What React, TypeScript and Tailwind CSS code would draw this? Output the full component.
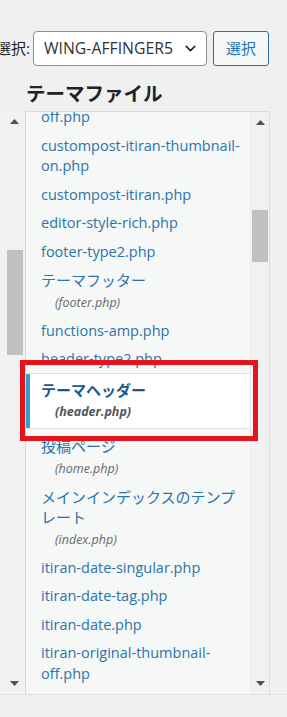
import { ChevronDown } from 'lucide-react'

type FileItem = {
  name: string
  file?: string
  current?: boolean
}

const files: FileItem[] = [
  { name: 'custompost-itiran-thumbnail-off.php' },
  { name: 'custompost-itiran-thumbnail-on.php' },
  { name: 'custompost-itiran.php' },
  { name: 'editor-style-rich.php' },
  { name: 'footer-type2.php' },
  { name: 'テーマフッター', file: '(footer.php)' },
  { name: 'functions-amp.php' },
  { name: 'header-type2.php' },
  { name: 'テーマヘッダー', file: '(header.php)', current: true },
  { name: '投稿ページ', file: '(home.php)' },
  { name: 'メインインデックスのテンプレート', file: '(index.php)' },
  { name: 'itiran-date-singular.php' },
  { name: 'itiran-date-tag.php' },
  { name: 'itiran-date.php' },
  { name: 'itiran-original-thumbnail-off.php' },
  { name: 'itiran-tag.php' },
]

const font = { fontFamily: '"Open Sans", "Noto Sans CJK JP", sans-serif' }

// 日本語はやや大きめ、英字は少し小さめにして元の幅に合わせる
const isLatin = (s: string) => /^[\x20-\x7e]+$/.test(s)

function Arrow({ down = false }: { down?: boolean }) {
  return (
    <svg width="9" height="5" viewBox="0 0 9 5" className="block">
      {down ? <path d="M0 0 H9 L4.5 5 Z" fill="#505050" /> : <path d="M0 5 H9 L4.5 0 Z" fill="#505050" />}
    </svg>
  )
}

function Scrollbar({
  thumbTop,
  thumbHeight,
  className,
  thumbClass,
}: {
  thumbTop: number
  thumbHeight: number
  className: string
  thumbClass: string
}) {
  return (
    <div className={`flex flex-col ${className}`}>
      <div className="h-[20px] flex items-center justify-center shrink-0">
        <Arrow />
      </div>
      <div className="flex-1">
        <div className={`bg-[#c1c1c1] ${thumbClass}`} style={{ marginTop: thumbTop, height: thumbHeight }} />
      </div>
      <div className="h-[22px] flex items-center justify-center shrink-0">
        <Arrow down />
      </div>
    </div>
  )
}

export default function App() {
  return (
    <div className="relative w-[287px] h-[717px] overflow-hidden bg-[#f0f0f1] text-[#1d2327]" style={font}>
      {/* テーマ選択 */}
      <div className="flex items-center pt-[31px]">
        <label className="-ml-[4px] text-[15px] leading-[35px] text-[#1d2327]">選択:</label>
        <div className="ml-[3px] w-[174px] h-[35px] flex items-center justify-between bg-white border border-[#8c8f94] rounded-[4px] pl-[10px] pr-[7px]">
          <span className="text-[15.8px] text-[#2c3338]">WING-AFFINGER5</span>
          <ChevronDown size={17} strokeWidth={2.2} className="text-[#1d2327]" />
        </div>
        <button className="ml-[6px] w-[56px] h-[35px] bg-[#f6f7f7] border border-[#2271b1] rounded-[3px] text-[15px] text-[#2271b1]">
          選択
        </button>
      </div>

      <h2
        className="mt-[14px] pl-[26px] text-[19.5px] leading-[26px] font-bold text-[#1d2327]"
        style={{ fontFamily: '"Noto Sans CJK JP", sans-serif' }}
      >
        テーマファイル
      </h2>

      {/* ファイル一覧 */}
      <div className="mt-[5px] flex h-[584px] border-b border-[#e2e2e2]">
        <Scrollbar
          thumbTop={119}
          thumbHeight={105}
          className="w-[25px] bg-[#f1f1f1] pl-[4px]"
          thumbClass="ml-[3px] w-[16px]"
        />
        <div className="flex w-[245px] bg-[#f6f7f7] border border-b-0 border-[#dcdcde]">
          <div className="flex-1 overflow-hidden">
            <ul className="-mt-[29.5px]">
              {files.map((f) =>
                f.current ? (
                  <li
                    key={f.name}
                    className="mb-[4px] pt-[6px] pb-[6px] pl-[11px] pr-[4px] bg-white border-l-4 border-[#2ea2cc] shadow-[0_0_0_1px_#e4e4e4,0_1px_1px_rgba(0,0,0,0.06)]"
                  >
                    <div className="text-[15px] leading-[20.5px] font-bold text-[#1a5a8a]">{f.name}</div>
                    <div className="mt-[2px] pl-[14px] text-[12.5px] leading-[20px] italic font-bold text-[#50575e]">
                      {f.file}
                    </div>
                  </li>
                ) : (
                  <li key={f.name} className="py-[4px] pl-[15px] pr-[4px]">
                    <div
                      className={`${isLatin(f.name) ? 'text-[14.5px]' : 'text-[15px]'} leading-[20.5px] text-[#2b74a9]`}
                    >
                      {f.name}
                    </div>
                    {f.file && (
                      <div className="mt-[2px] pl-[14px] text-[12.5px] leading-[20px] italic text-[#646970]">{f.file}</div>
                    )}
                  </li>
                )
              )}
            </ul>
          </div>
          <Scrollbar
            thumbTop={78}
            thumbHeight={52}
            className="w-[19px] bg-[#f1f1f1] border-l border-[#ececec]"
            thumbClass="mx-[1px]"
          />
        </div>
      </div>

      {/* 注目枠 */}
      <div className="absolute left-[20px] top-[360px] w-[238px] h-[81px] border-[5px] border-[#e3141c]" />
    </div>
  )
}
